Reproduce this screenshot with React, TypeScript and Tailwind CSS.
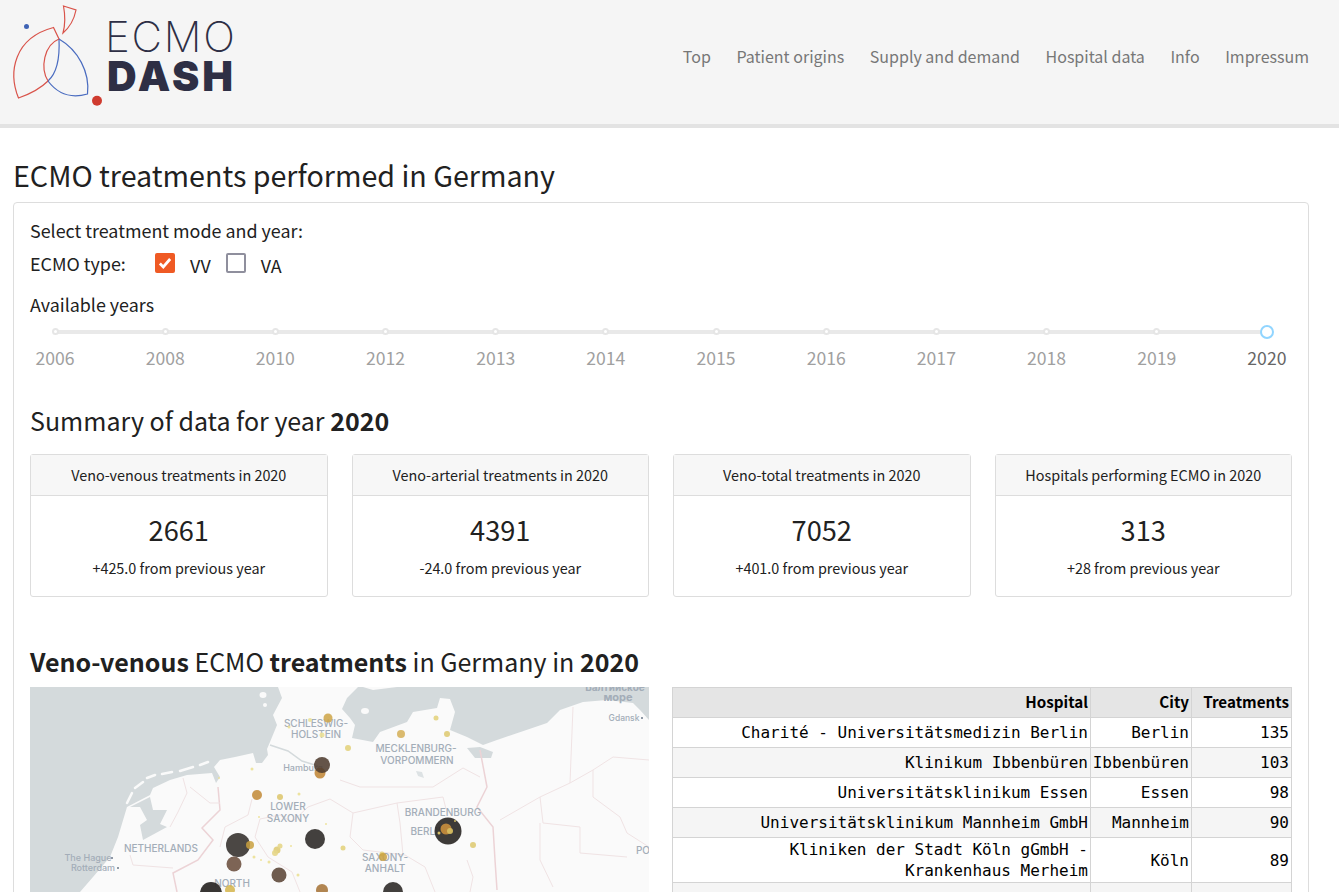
const years = ["2006", "2008", "2010", "2012", "2013", "2014", "2015", "2016", "2017", "2018", "2019", "2020"];

const navLinks = ["Top", "Patient origins", "Supply and demand", "Hospital data", "Info", "Impressum"];

const summaryCards = [
  { title: "Veno-venous treatments in 2020", value: "2661", note: "+425.0 from previous year" },
  { title: "Veno-arterial treatments in 2020", value: "4391", note: "-24.0 from previous year" },
  { title: "Veno-total treatments in 2020", value: "7052", note: "+401.0 from previous year" },
  { title: "Hospitals performing ECMO in 2020", value: "313", note: "+28 from previous year" },
];

// the last row's text sits below the fold in the screenshot
const rows = [
  ["Charité - Universitätsmedizin Berlin", "Berlin", "135"],
  ["Klinikum Ibbenbüren", "Ibbenbüren", "103"],
  ["Universitätsklinikum Essen", "Essen", "98"],
  ["Universitätsklinikum Mannheim GmbH", "Mannheim", "90"],
  ["Kliniken der Stadt Köln gGmbH - Krankenhaus Merheim", "Köln", "89"],
  ["", "", ""],
];

// x, y (map coordinates), radius, colour, opacity
const markers: [number, number, number, string, number][] = [
  [290, 86, 5.5, "#c28a3c", 0.9],
  [292, 78, 8, "#4f3c30", 0.88],
  [227, 108, 5, "#c48f40", 0.9],
  [250, 110, 3, "#dcc468", 0.85],
  [208, 158, 12, "#3c3734", 0.92],
  [220, 158, 4, "#c9a03e", 0.85],
  [204, 177, 7.5, "#6b4f3e", 0.88],
  [249, 188, 7.5, "#5f4a3c", 0.9],
  [285, 152, 10, "#33302e", 0.92],
  [292, 203, 6, "#ad7e48", 0.95],
  [181, 206, 11, "#2e2b29", 0.95],
  [200, 203, 5, "#d4b44a", 0.85],
  [247, 163, 3.5, "#dfcb76", 0.9],
  [245, 166, 3, "#e6d688", 0.9],
  [250, 159, 2.5, "#e6d688", 0.9],
  [298, 31, 4.5, "#cfa850", 0.9],
  [280, 33, 2, "#ebe095", 0.9],
  [292, 48, 2.5, "#ebe095", 0.9],
  [259, 40, 1.5, "#ebe095", 0.9],
  [222, 82, 1.5, "#ebe095", 0.9],
  [189, 91, 1, "#ebe095", 0.9],
  [269, 107, 1.5, "#ebe095", 0.9],
  [229, 130, 1, "#ebe095", 0.9],
  [261, 159, 1, "#ebe095", 0.9],
  [224, 170, 1.5, "#ebe095", 0.9],
  [231, 173, 1, "#ebe095", 0.9],
  [239, 175, 1.5, "#ebe095", 0.9],
  [268, 188, 1.5, "#ebe095", 0.9],
  [296, 137, 1, "#ebe095", 0.9],
  [371, 47, 4, "#d6b25e", 0.9],
  [406, 31, 2.5, "#e3d37e", 0.9],
  [417, 47, 3, "#dfcb76", 0.9],
  [318, 61, 3, "#e3d37e", 0.9],
  [313, 161, 2.5, "#e3d37e", 0.9],
  [352, 167, 2.5, "#e3d37e", 0.9],
  [353, 170, 4, "#c9a03e", 0.85],
  [443, 158, 3, "#dfcb76", 0.9],
  [418, 144, 13.5, "#2e2b29", 0.93],
  [416, 142, 5.5, "#c28a3c", 0.95],
  [420, 144, 3, "#d6bc60", 0.95],
  [409, 146, 1.5, "#dcc468", 0.95],
  [425, 134, 1, "#dcc468", 0.95],
  [363, 205, 10, "#33302e", 0.92],
];

function Logo() {
  return (
    <div className="relative h-[124px] w-[250px] shrink-0">
      <svg className="absolute left-0 top-0" width="110" height="110" viewBox="0 0 110 110" fill="none">
        <path d="M59 39C60 60 57 73 48 81" stroke="#4a6cc0" strokeWidth="1.2" />
        <path d="M48 81C40 89 30 94 18.5 98C8 72 14 38 53.5 27.5L59 39C44 45 40 68 48 81Z" stroke="#d9534a" strokeWidth="1.2" />
        <path d="M48 81C57 93 70 99 87.5 94C90 72 78 50 59 39" stroke="#4a6cc0" strokeWidth="1.2" />
        <path d="M63.5 6L76 10C74 20 70 27 63 33C66 22 65 14 63.5 6Z" stroke="#d9534a" strokeWidth="1.2" />
        <circle cx="26.5" cy="26.5" r="2.5" fill="#3f63b5" />
        <circle cx="97" cy="100.7" r="5" fill="#cf3b2f" />
      </svg>
      <span className="absolute left-[105px] top-[13px] font-['Inter',sans-serif] text-[42px] font-extralight leading-[48px] tracking-[1.8px] text-[#2e2f45]">ECMO</span>
      <span className="absolute left-[107px] top-[52px] font-['Inter',sans-serif] text-[41px] font-black leading-[48px] tracking-[3px] text-[#2e2f45]">DASH</span>
    </div>
  );
}

function GermanyMap() {
  return (
    <svg width="619" height="300" viewBox="0 0 619 300" className="block shrink-0">
      <rect width="619" height="300" fill="#d4dadc" />
      <path
        d="M30 225L42 210L50 205L63 190L80 170L88 150L97 120L120 108L123 101L140 93L157 88L182 86L186 96L190 90L184 80L190 73L205 70L223 66L226 76L232 76L238 68L237 62L240 55L247 38L243 28L252 11L248 0L328 0L317 11L312 22L320 31L325 38L322 51L343 55L350 45L377 35L383 25L407 21L410 11L420 12L425 25L420 43L437 50L453 58L467 53L517 36L530 23L553 15L577 13L603 16L610 23L619 33L619 300L30 300Z"
        fill="#fafafa"
      />
      {/* IJsselmeer, lagoons and lakes */}
      <path d="M100 120L120 110L123 123L137 123L130 137L137 140L113 153L110 138L117 133L110 120Z" fill="#d4dadc" />
      <path d="M437 61L450 60L463 65L461 71L445 71Z" fill="#d4dadc" />
      <path d="M386 84L392 85L394 91L388 89Z" fill="#dde2e4" />
      <path d="M240 58L258 64L272 74L288 79" fill="none" stroke="#d4dadc" strokeWidth="1.5" />
      {/* islands */}
      <g fill="none" stroke="#fafafa" strokeWidth="2.5" strokeLinecap="round">
        <path d="M97 116L102 106" />
        <path d="M105 101L113 95" />
        <path d="M117 91L125 88" />
        <path d="M132 87L142 85" />
        <path d="M150 84L163 80" />
        <path d="M170 78L178 75" />
      </g>
      <g fill="#fafafa">
        <ellipse cx="233" cy="8" rx="3.5" ry="3" />
        <circle cx="235" cy="18" r="2" />
        <ellipse cx="335" cy="24" rx="4" ry="3" />
        <path d="M333 0L343 3L367 0Z" />
      </g>
      {/* country borders */}
      <g fill="none" stroke="#ecd3d6" strokeWidth="1.5">
        <path d="M188 100L190 123L172 141L183 153L168 173L143 186L147 205" />
        <path d="M450 63L457 100L447 120L463 140L465 173L467 203" />
      </g>
      {/* region borders */}
      <g fill="none" stroke="#f0e3e4" strokeWidth="1">
        <path d="M153 91L157 106L148 125L140 140" />
        <path d="M160 100L180 116L190 116" />
        <path d="M100 168L103 178L143 181" />
        <path d="M543 20L540 96L510 110L470 133" />
        <path d="M540 96L563 83L583 70L619 73" />
        <path d="M563 83L563 110L590 130L597 146L619 160" />
        <path d="M510 110L513 136L550 140L550 166L597 170" />
        <path d="M510 136L510 173L523 200" />
        <path d="M310 93L330 100L363 100L403 100L433 81L450 90" />
        <path d="M323 126L367 116L413 110L416 122" />
        <path d="M323 126L320 150L333 163L375 168L395 180L405 205" />
        <path d="M367 116L370 136L373 168" />
        <path d="M437 173L443 190L440 205" />
        <path d="M222 112L218 128L195 140L190 160" />
        <path d="M262 135L250 128L230 132L225 150L238 170L262 185L270 205" />
        <path d="M262 135L278 120L300 112L323 126" />
      </g>
      <g fill="#a3adb8" fontFamily="Inter, sans-serif" fontSize="10" fontWeight="500" textAnchor="middle">
        <text x="286" y="40">SCHLESWIG-</text>
        <text x="286" y="51">HOLSTEIN</text>
        <text x="386" y="65">MECKLENBURG-</text>
        <text x="387" y="77">VORPOMMERN</text>
        <text x="258" y="123">LOWER</text>
        <text x="258" y="135">SAXONY</text>
        <text x="131" y="165">NETHERLANDS</text>
        <text x="413" y="129">BRANDENBURG</text>
        <text x="398" y="148">BERLIN</text>
        <text x="355" y="174">SAXONY-</text>
        <text x="355" y="185">ANHALT</text>
        <text x="202" y="200">NORTH</text>
        <text x="273" y="84" fontSize="9">Hamburg</text>
        <text x="58" y="174" fontSize="9">The Hague</text>
        <text x="63" y="184" fontSize="9">Rotterdam</text>
        <text x="594" y="34" fontSize="8.5">Gdansk</text>
        <text x="588" y="14" fontWeight="700" fontSize="11">море</text>
        <text x="585" y="4" fontWeight="700" fontSize="10">Балтийское</text>
        <text x="613" y="167">PO</text>
      </g>
      <g fill="#8f99a5">
        <rect x="81" y="170" width="2" height="2" />
        <rect x="87" y="180" width="2" height="2" />
        <rect x="611" y="30" width="2" height="2" />
      </g>
      {markers.map(([x, y, r, color, opacity]) => (
        <circle key={`${x}-${y}`} cx={x} cy={y} r={r} fill={color} fillOpacity={opacity} />
      ))}
    </svg>
  );
}

export default function App() {
  return (
    <div className="h-[892px] overflow-hidden bg-white font-['Noto_Sans_CJK_SC',sans-serif] text-[#212121]">
      <header className="flex h-[128px] items-start justify-between border-b-4 border-[#e3e3e3] bg-[#f5f5f5] pr-[30px]">
        <Logo />
        <nav className="mt-[43px] flex gap-[25.6px] text-[16px] leading-[26px] text-[#777777]">
          {navLinks.map((link) => (
            <a key={link}>{link}</a>
          ))}
        </nav>
      </header>

      <main className="pl-[13px] pr-[30px]">
        <h1 className="mt-[25px] text-[28.65px] leading-[44px]">ECMO treatments performed in Germany</h1>

        <section className="mt-[5px] rounded border border-[#dddddd] px-4 pt-[13px] pb-8">
          <p className="text-[17.9px] leading-[28px]">Select treatment mode and year:</p>
          <div className="mt-[5px] flex h-[32px] items-start text-[17.9px] leading-[28px]">
            <span className="w-[125px]">ECMO type:</span>
            <span className="mt-[4px] flex h-5 w-5 items-center justify-center rounded-[2px] bg-[#ef5a24]">
              <svg width="16" height="16" viewBox="0 0 14 14" fill="none">
                <path d="M2.5 7.5L5.5 10.5L11.5 3.5" stroke="white" strokeWidth="2.4" />
              </svg>
            </span>
            <span className="ml-[15px] mt-[2px]">VV</span>
            <span className="ml-[15px] mt-[4px] h-5 w-5 rounded-[2px] border-2 border-[#8f8f9d] bg-white" />
            <span className="ml-[15px] mt-[2px]">VA</span>
          </div>

          <p className="mt-[9px] text-[17.9px] leading-[28px]">Available years</p>

          <div className="relative mx-[25px] mt-[9px] h-[42px]">
            <div className="absolute left-0 right-0 top-[3px] h-1 rounded bg-[#e9e9e9]" />
            <div className="relative flex justify-between">
              {years.map((year) => (
                <div key={year} className="flex w-0 flex-col items-center">
                  {year === "2020" ? (
                    <span className="h-[14px] w-[14px] shrink-0 -translate-y-[2px] rounded-full border-2 border-[#91d5ff] bg-white" />
                  ) : (
                    <span className="mt-[1px] mb-[2px] h-[7px] w-[7px] shrink-0 rounded-full border-2 border-[#e6e6e6] bg-white" />
                  )}
                  <span className={year === "2020" ? "mt-[5px] text-[17.6px] leading-[24px] text-[#666666]" : "mt-[9px] text-[17.6px] leading-[24px] text-[#a0a0a0]"}>
                    {year}
                  </span>
                </div>
              ))}
            </div>
          </div>

          <h2 className="mt-[33px] text-[25px] leading-[36px]">
            Summary of data for year <b>2020</b>
          </h2>

          <div className="mt-[16px] grid grid-cols-4 gap-6">
            {summaryCards.map((card) => (
              <div key={card.title} className="h-[143px] rounded-[3px] border border-[#dddddd] text-center">
                <div className="flex h-[41px] items-center justify-center border-b border-[#dddddd] bg-[#f7f7f7] text-[14.4px]">{card.title}</div>
                <div className="mt-[13px] text-[27.2px] leading-[40px]">{card.value}</div>
                <div className="mt-[8px] text-[14.4px] leading-[22px]">{card.note}</div>
              </div>
            ))}
          </div>

          <h2 className="mt-[46px] text-[25px] leading-[36px]">
            <b>Veno-venous</b> ECMO <b>treatments</b> in Germany in <b>2020</b>
          </h2>

          <div className="mt-[8px] flex gap-[23px]">
            <GermanyMap />
            <table className="h-fit w-[619px] table-fixed border-collapse self-start text-right font-['DejaVu_Sans_Mono',monospace] text-[16px] leading-[21px] text-black">
              <colgroup>
                <col className="w-[418px]" />
                <col className="w-[101px]" />
                <col className="w-[100px]" />
              </colgroup>
              <thead>
                <tr className="h-[30px] bg-[#e5e5e5] font-['Noto_Sans_CJK_SC',sans-serif] text-[15.2px]">
                  <th className="border border-[#d4d4d4] px-[2px] pb-[2px] font-bold">Hospital</th>
                  <th className="border border-[#d4d4d4] px-[2px] pb-[2px] font-bold">City</th>
                  <th className="border border-[#d4d4d4] px-[2px] pb-[2px] font-bold">Treatments</th>
                </tr>
              </thead>
              <tbody>
                {rows.map(([hospital, city, count], i) => (
                  <tr key={i} className={i % 2 === 0 ? "h-[30px] bg-white" : "h-[30px] bg-[#f5f5f5]"}>
                    <td className="border border-[#d4d4d4] py-[1px] pr-[2px] pl-[60px]">{hospital}</td>
                    <td className="border border-[#d4d4d4] py-[1px] pr-[2px]">{city}</td>
                    <td className="border border-[#d4d4d4] py-[1px] pr-[2px]">{count}</td>
                  </tr>
                ))}
              </tbody>
            </table>
          </div>
        </section>
      </main>
    </div>
  );
}
